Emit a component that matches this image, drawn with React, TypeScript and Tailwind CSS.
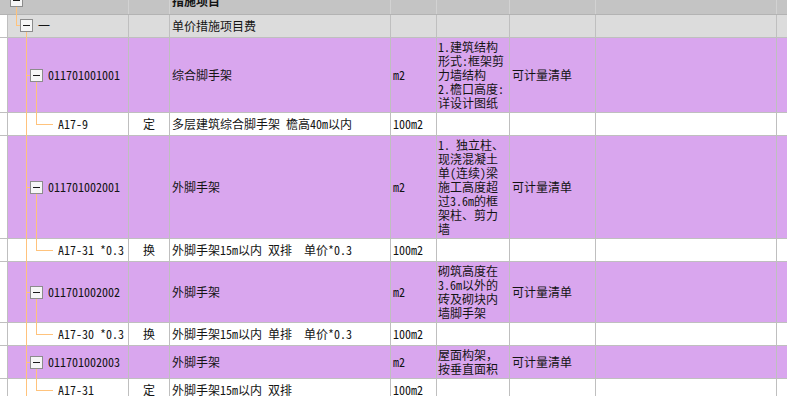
import React from "react";

type Item = {
  kind: "item";
  code: string;
  name: string;
  unit: string;
  desc: string[];
  extra: string;
  h: string;
};
type Child = {
  kind: "child";
  code: string;
  type: string;
  name: string;
  unit: string;
};
type Row = Item | Child;

const rows: Row[] = [
  {
    kind: "item",
    code: "011701001001",
    name: "综合脚手架",
    unit: "m2",
    desc: ["1.建筑结构", "形式:框架剪", "力墙结构", "2.檐口高度:", "详设计图纸"],
    extra: "可计量清单",
    h: "h-[75px]",
  },
  { kind: "child", code: "A17-9", type: "定", name: "多层建筑综合脚手架 檐高40m以内", unit: "100m2" },
  {
    kind: "item",
    code: "011701002001",
    name: "外脚手架",
    unit: "m2",
    desc: ["1. 独立柱、", "现浇混凝土", "单(连续)梁", "施工高度超", "过3.6m的框", "架柱、剪力", "墙"],
    extra: "可计量清单",
    h: "h-[103px]",
  },
  { kind: "child", code: "A17-31 *0.3", type: "换", name: "外脚手架15m以内 双排  单价*0.3", unit: "100m2" },
  {
    kind: "item",
    code: "011701002002",
    name: "外脚手架",
    unit: "m2",
    desc: ["砌筑高度在", "3.6m以外的", "砖及砌块内", "墙脚手架"],
    extra: "可计量清单",
    h: "h-[61px]",
  },
  { kind: "child", code: "A17-30 *0.3", type: "换", name: "外脚手架15m以内 单排  单价*0.3", unit: "100m2" },
  {
    kind: "item",
    code: "011701002003",
    name: "外脚手架",
    unit: "m2",
    desc: ["屋面构架，", "按垂直面积"],
    extra: "可计量清单",
    h: "h-[33px]",
  },
  { kind: "child", code: "A17-31", type: "定", name: "外脚手架15m以内 双排", unit: "100m2" },
];

const OR = "bg-[#ffc37c]";

function MinusBox({ className = "" }: { className?: string }) {
  return (
    <div
      className={
        "w-[13px] h-[13px] border border-[#8c8c8c] bg-[#f6f6f6] flex items-center justify-center z-10 shrink-0 " +
        className
      }
    >
      <div className="w-[7px] h-px bg-[#1a1a1a]" />
    </div>
  );
}

function Cells({
  bg,
  c1,
  c2,
  c3,
  c4,
  c5,
  c6,
}: {
  bg: string;
  c1: React.ReactNode;
  c2?: React.ReactNode;
  c3?: React.ReactNode;
  c4?: React.ReactNode;
  c5?: React.ReactNode;
  c6?: React.ReactNode;
}) {
  return (
    <>
      <div className="w-[8px] shrink-0 border-r border-[#bfbfbf] bg-white" />
      <div className={"relative w-[121px] shrink-0 border-r border-[#bfbfbf] flex items-center " + bg}>{c1}</div>
      <div className={"w-[41px] shrink-0 border-r border-[#bfbfbf] flex items-center justify-center " + bg}>{c2}</div>
      <div className={"w-[221px] shrink-0 border-r border-[#bfbfbf] flex items-center pl-[2px] whitespace-pre " + bg}>
        {c3}
      </div>
      <div className={"w-[46px] shrink-0 border-r border-[#bfbfbf] flex items-center pl-[2px] " + bg}>{c4}</div>
      <div
        className={
          "w-[73px] shrink-0 border-r border-[#bfbfbf] flex flex-col justify-center pl-[1px] leading-[14px] " + bg
        }
      >
        {c5}
      </div>
      <div className={"w-[86px] shrink-0 border-r border-[#bfbfbf] flex items-center pl-[2px] " + bg}>{c6}</div>
      <div className={"w-[181px] shrink-0 border-r border-[#bfbfbf] " + bg} />
      <div className={"flex-1 " + bg} />
    </>
  );
}

export default function App() {
  return (
    <div className="w-[787px] h-[396px] overflow-hidden bg-white text-[12px] leading-[14px] text-[#141414] font-['Noto_Sans_Mono_CJK_SC','Noto_Sans_CJK_SC',monospace]">
      {/* header row (clipped) */}
      <div className="flex h-[15px] border-b border-[#b3b3b3] bg-[#c4c4c4] overflow-hidden">
        <div className="relative w-[129px] shrink-0 border-r border-[#d2d2d2]">
          <MinusBox className="absolute left-[10px] top-[-6px]" />
          <div className={"absolute left-[16px] top-[7px] bottom-0 w-px " + OR} />
        </div>
        <div className="w-[41px] shrink-0 border-r border-[#d2d2d2]" />
        <div className="w-[221px] shrink-0 border-r border-[#d2d2d2] pl-[2px] overflow-hidden">
          <div className="font-bold leading-[12px] mt-[-5px]">措施项目</div>
        </div>
        <div className="w-[46px] shrink-0 border-r border-[#d2d2d2]" />
        <div className="w-[73px] shrink-0 border-r border-[#d2d2d2]" />
        <div className="w-[86px] shrink-0 border-r border-[#d2d2d2]" />
        <div className="w-[181px] shrink-0 border-r border-[#d2d2d2]" />
        <div className="flex-1" />
      </div>

      {/* group row 一 */}
      <div className="flex h-[23px] border-b border-[#bfbfbf]">
        <Cells
          bg="bg-[#dcdcdc]"
          c1={
            <>
              <div className={"absolute left-[8px] top-[-1px] h-[12px] w-px " + OR} />
              <div className={"absolute left-[8px] top-[10px] h-px w-[4px] " + OR} />
              <MinusBox className="absolute left-[12px] top-[4px]" />
              <div className={"absolute left-[18px] top-[16px] bottom-[-1px] w-px " + OR} />
              <span className="absolute left-[30px] top-[4px]">一</span>
            </>
          }
          c3="单价措施项目费"
        />
      </div>

      {rows.map((r, i) =>
        r.kind === "item" ? (
          <div key={i} className={"flex border-b border-[#bfbfbf] " + r.h}>
            <Cells
              bg="bg-[#d9a6ee]"
              c1={
                <>
                  <div className={"absolute left-[18px] top-[-1px] bottom-[-1px] w-px " + OR} />
                  <div className={"absolute left-[28px] top-1/2 bottom-[-1px] w-px " + OR} />
                  <div className={"ml-[18px] h-px w-[4px] " + OR} />
                  <MinusBox />
                  <span className="ml-[5px]">{r.code}</span>
                </>
              }
              c3={r.name}
              c4={r.unit}
              c5={r.desc.map((d, j) => (
                <div key={j} className="whitespace-pre">
                  {d}
                </div>
              ))}
              c6={r.extra}
            />
          </div>
        ) : (
          <div key={i} className="flex h-[23px] border-b border-[#bfbfbf]">
            <Cells
              bg="bg-white"
              c1={
                <>
                  <div className={"absolute left-[18px] top-[-1px] bottom-[-1px] w-px " + OR} />
                  <div className={"absolute left-[28px] top-[-1px] h-[calc(50%+1px)] w-px " + OR} />
                  <div className={"absolute left-[28px] top-1/2 h-px w-[17px] " + OR} />
                  <span className="ml-[50px] whitespace-pre">{r.code}</span>
                </>
              }
              c2={r.type}
              c3={r.name}
              c4={r.unit}
            />
          </div>
        )
      )}
    </div>
  );
}
